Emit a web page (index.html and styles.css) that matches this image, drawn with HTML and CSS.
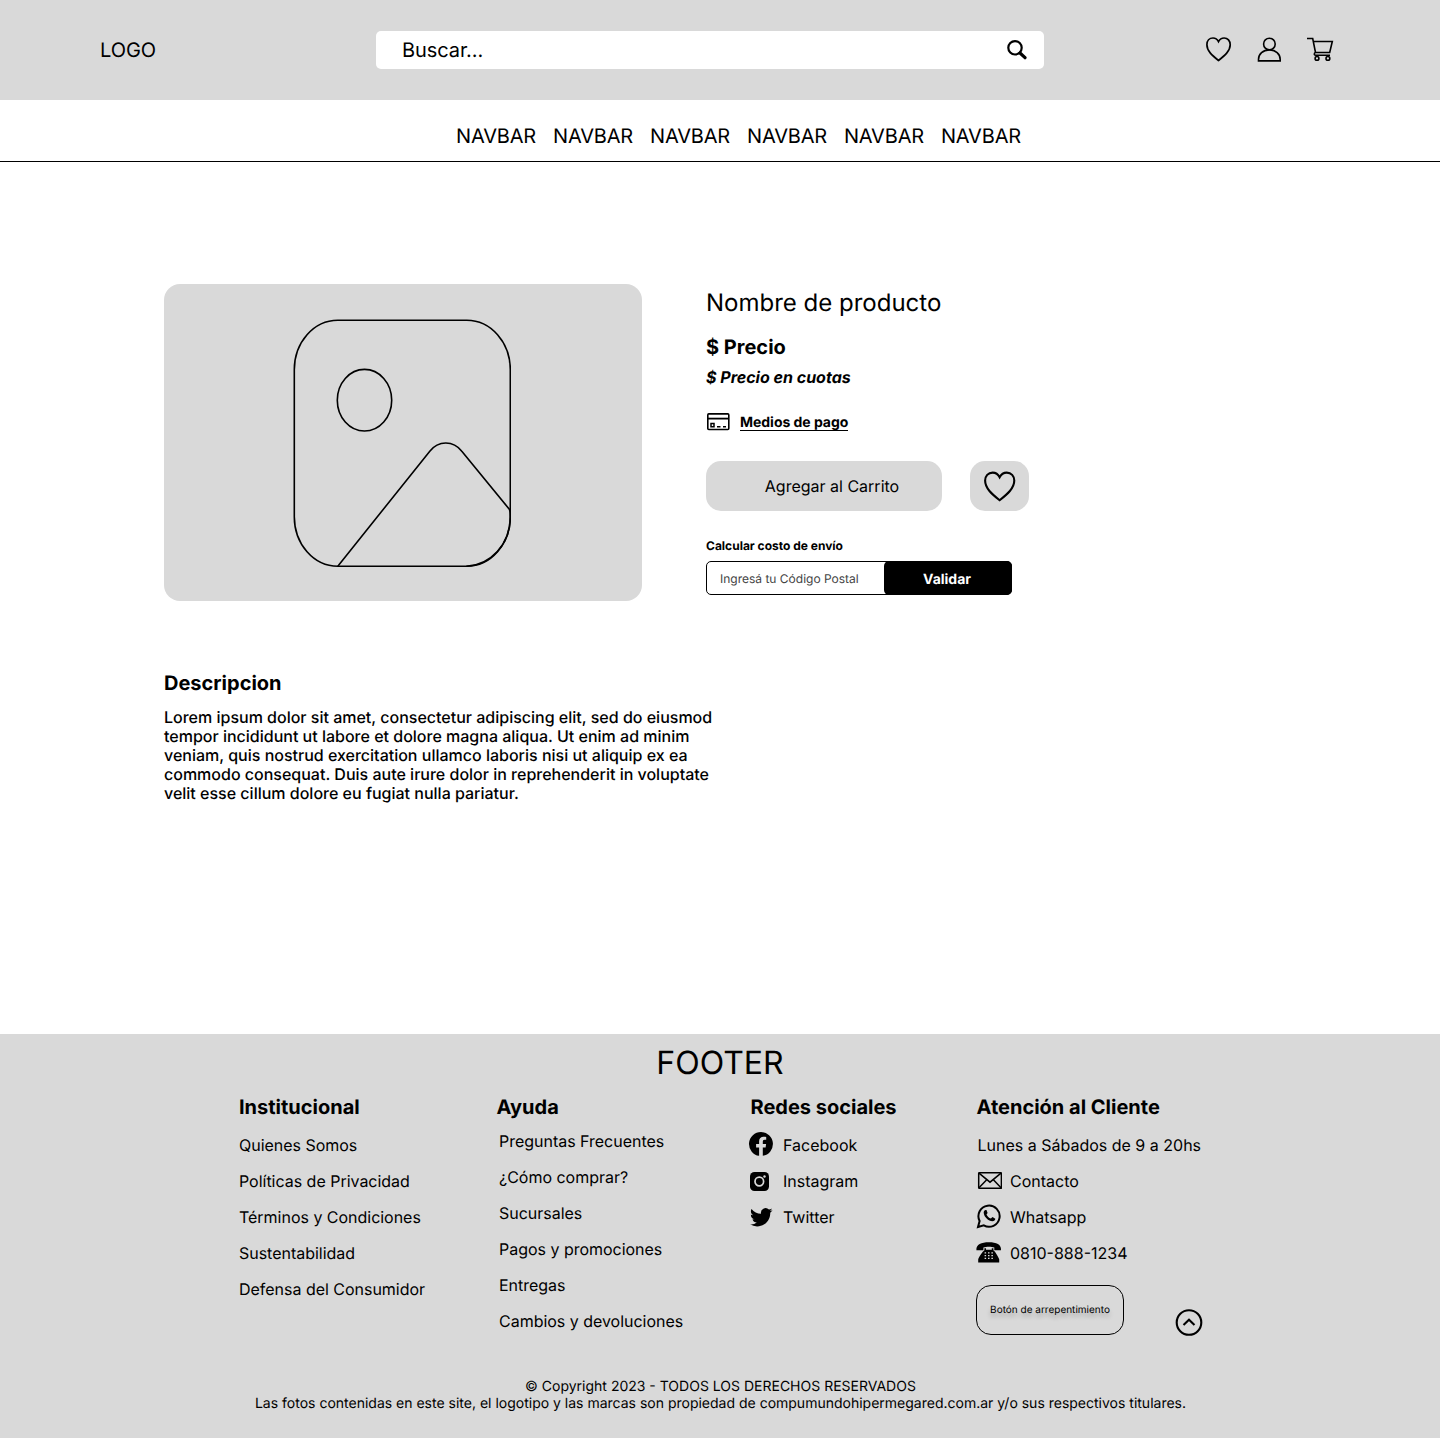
FILE: index.html
```html
<!DOCTYPE html>
<html lang="es">
<head>
<meta charset="utf-8">
<title>Producto</title>
<link rel="stylesheet" href="styles.css">
</head>
<body>
<header class="header">
  <span class="logo">LOGO</span>
  <div class="search">
    <span>Buscar...</span>
    <svg width="20" height="20" viewBox="0 0 20 20" fill="none" stroke="#000"><circle cx="8" cy="7.8" r="6.7" stroke-width="2.2"/><path d="M13 13l5 4.7" stroke-width="3.2" stroke-linecap="round"/></svg>
  </div>
  <div class="actions">
    <svg width="26" height="25" viewBox="0 0 26 25" fill="none" stroke="#000" stroke-width="1.7"><path d="M12.500 4.700C11 1.800 9.200 1 7 1C3.400 1 .9 3.900 .9 7.700C.9 14 6.300 18.500 12.500 23.500C18.700 18.500 24.200 14 24.200 7.700C24.200 3.900 21.700 1 18.100 1C15.900 1 14 1.800 12.500 4.700Z"/></svg>
    <svg width="24" height="25" viewBox="0 0 24 25" fill="none" stroke="#000" stroke-width="1.6"><path d="M1.500 23.900V22.500C1.500 17 6 12.900 12.300 12.900S23.200 17 23.200 22.500V23.900Z"/><circle cx="12.400" cy="7" r="5.800"/></svg>
    <svg width="27" height="25" viewBox="0 0 27 25" fill="none" stroke="#000" stroke-width="1.600"><path d="M0 1.500H5.700L8.500 15.500H22.700L25.300 4.500H6.500M8.500 15.500C7 15.700 6.800 18.200 8.500 18.200H23"/><circle cx="10" cy="21.400" r="1.900"/><circle cx="20.900" cy="21.400" r="1.900"/></svg>
  </div>
</header>
<nav class="nav">
  <a>NAVBAR</a><a>NAVBAR</a><a>NAVBAR</a><a>NAVBAR</a><a>NAVBAR</a><a>NAVBAR</a>
</nav>
<main class="main">
  <section class="product">
    <div class="photo">
      <svg width="218" height="248" viewBox="0 0 218 248" fill="none" stroke="#000" stroke-width="1.600"><g transform="translate(.3 .2)"><rect x="1" y="1" width="216" height="246" rx="43.500" ry="49.500"/><ellipse cx="71.200" cy="81" rx="27.200" ry="30.800"/><path d="M44.500 247L136.500 132C145 121 160 121 168.500 132L216 190C217 192 217 195 217 198C217 225 197 246 173 247"/></g></svg>
    </div>
    <div class="details">
      <h1 class="name">Nombre de producto</h1>
      <p class="price">$ Precio</p>
      <p class="installments">$ Precio en cuotas</p>
      <div class="payment">
        <svg width="24" height="18" viewBox="0 0 24 18" fill="none" stroke="#000"><rect x="1.800" y=".9" width="21" height="15.600" rx="1" stroke-width="1.600"/><path d="M1.800 5.600H22.800" stroke-width="1.800"/><path d="M5 10.500H8V13.700H5ZM11 13.700H14.500M17 13.700H20" stroke-width="1.500"/></svg>
        <a>Medios de pago</a>
      </div>
      <div class="buttons">
        <button class="add">Agregar al Carrito</button>
        <button class="fav"><svg width="32" height="31" viewBox="0 0 26 25" fill="none" stroke="#000" stroke-width="1.700"><path d="M12.700 4.900C11.200 2 9.300 1.200 7 1.200C3.400 1.200 .9 4 .9 7.700C.9 14 6.400 18.700 12.700 23.700C19 18.700 24.600 14 24.600 7.700C24.600 4 22.100 1.200 18.500 1.200C16.200 1.200 14.200 2 12.700 4.900Z"/></svg></button>
      </div>
      <p class="shipping">Calcular costo de envío</p>
      <div class="postal"><span>Ingresá tu Código Postal</span><button class="validate">Validar</button></div>
    </div>
  </section>
  <section class="description">
    <h2>Descripcion</h2>
    <p>Lorem ipsum dolor sit amet, consectetur adipiscing elit, sed do eiusmod<br>tempor incididunt ut labore et dolore magna aliqua. Ut enim ad minim<br>veniam, quis nostrud exercitation ullamco laboris nisi ut aliquip ex ea<br>commodo consequat. Duis aute irure dolor in reprehenderit in voluptate<br>velit esse cillum dolore eu fugiat nulla pariatur.</p>
  </section>
</main>
<footer class="footer">
  <div class="footer-title">FOOTER</div>
  <div class="columns">
    <section>
      <h3>Institucional</h3>
      <ul class="links">
        <li>Quienes Somos</li><li>Políticas de Privacidad</li><li>Términos y Condiciones</li><li>Sustentabilidad</li><li>Defensa del Consumidor</li>
      </ul>
    </section>
    <section>
      <h3>Ayuda</h3>
      <ul class="links help">
        <li>Preguntas Frecuentes</li><li>¿Cómo comprar?</li><li>Sucursales</li><li>Pagos y promociones</li><li>Entregas</li><li>Cambios y devoluciones</li>
      </ul>
    </section>
    <section>
      <h3>Redes sociales</h3>
      <ul class="links social">
        <li><svg width="26" height="26" viewBox="0 0 26 26"><path d="M13 1A12 12 0 0 0 11.100 24.850V16.500H8.100V13H11.100V10.300C11.100 7.300 12.900 5.700 15.600 5.700C16.900 5.700 18.200 5.900 18.200 5.900V8.800H16.700C15.200 8.800 14.800 9.700 14.800 10.700V13H18.100L17.600 16.500H14.800V24.850A12 12 0 0 0 13 1Z"/></svg>Facebook</li>
        <li><svg width="26" height="26" viewBox="0 0 26 26"><rect x="2" y="5" width="19" height="19" rx="4.500"/><circle cx="11.300" cy="14.500" r="4.300" fill="none" stroke="#d9d9d9" stroke-width="1.700"/><circle cx="16.500" cy="9.500" r="1.200" fill="#d9d9d9"/></svg>Instagram</li>
        <li><svg width="26" height="26" viewBox="0 0 26 26"><path transform="translate(2 3) scale(.94)" d="M23.950 4.570a10 10 0 0 1-2.820.78 4.960 4.960 0 0 0 2.160-2.730c-.950.560-2 .960-3.130 1.180a4.920 4.920 0 0 0-8.380 4.490C7.690 8.090 4.070 6.130 1.640 3.160a4.820 4.820 0 0 0-.670 2.480c0 1.710.870 3.210 2.190 4.100a4.900 4.900 0 0 1-2.230-.620v.060a4.920 4.920 0 0 0 3.950 4.830 5 5 0 0 1-2.210.080 4.940 4.940 0 0 0 4.600 3.420A9.870 9.870 0 0 1 0 19.540a14 14 0 0 0 7.550 2.210c9.050 0 14-7.500 14-13.980 0-.210 0-.420-.010-.630a9.940 9.940 0 0 0 2.460-2.550z"/></svg>Twitter</li>
      </ul>
    </section>
    <section>
      <h3>Atención al Cliente</h3>
      <ul class="links contact">
        <li class="hours">Lunes a Sábados de 9 a 20hs</li>
        <li><svg width="26" height="26" viewBox="0 0 26 26" fill="none" stroke="#000" stroke-width="1.500"><rect x="2.700" y="5.700" width="22.700" height="15.500" rx=".5"/><path d="M3 6.200L14 15.200L25 6.200M3 20.700L10.700 12.700M25 20.700L17.400 12.700"/></svg>Contacto</li>
        <li><svg width="26" height="26" viewBox="0 0 26 26"><path d="M2 24L3.600 18A10.600 10.600 0 1 1 7.800 22.400Z" fill="none" stroke="#000" stroke-width="2"/><path d="M9.500 7C8.500 7.200 7.600 8.500 7.700 9.800C8 14.200 12.500 18.200 16.500 18.200C18.100 18.200 19.300 17.200 19.300 15.800L16.500 14.100L14.900 15.600C12.900 14.800 11.300 13.200 10.500 11.400L11.600 9.900L10.500 7Z"/></svg>Whatsapp</li>
        <li><svg width="26" height="26" viewBox="0 0 26 26"><g transform="translate(-.6 .8)"><path d="M1 10.400C.6 4.500 6 2.500 13.500 2.500S26 4.500 25.600 10.400H18.900V7.800C16 6.700 11 6.700 8 7.800V10.400Z"/><path d="M9 8.500H10.600V10H16.400V8.500H18V10.500C20 12 22.500 16.500 23.800 19.500V22.800H2.800V19.500C4 16.500 7 12 9 10.500Z"/><path d="M9.200 13H18M9.200 15.800H18M9.200 18.600H18" fill="none" stroke="#d9d9d9" stroke-width="1.300" stroke-dasharray="1.500 1.900"/></g></svg>0810-888-1234</li>
      </ul>
      <div class="contact-end">
        <button class="regret">Botón de arrepentimiento</button>
        <svg width="28" height="28" viewBox="0 0 28 28" fill="none" stroke="#000" stroke-width="2.100"><circle cx="14" cy="14.500" r="12.300"/><path d="M8.500 17L14 11.700L19.500 17"/></svg>
      </div>
    </section>
  </div>
  <p class="legal">© Copyright 2023 - TODOS LOS DERECHOS RESERVADOS<br>Las fotos contenidas en este site, el logotipo y las marcas son propiedad de compumundohipermegared.com.ar y/o sus respectivos titulares.</p>
</footer>
</body>
</html>
```
FILE: styles.css
```css
* { box-sizing: border-box; margin: 0; padding: 0; }
body { width: 1440px; font: 400 16px/19px Inter, sans-serif; color: #000; background: #fff; text-rendering: geometricPrecision; }
button { font: inherit; color: inherit; border: 0; text-rendering: inherit; }
ul { list-style: none; }
svg { display: block; flex: none; }

.header { height: 100px; background: #d9d9d9; display: grid; grid-template-columns: 276px 668px 1fr; align-items: center; padding: 0 106px 0 100px; font-size: 20px; line-height: 24px; letter-spacing: -.08px; }
.search { height: 38px; background: #fff; border-radius: 5px; display: flex; align-items: center; justify-content: space-between; padding: 0 17px 0 26px; }
.actions { display: flex; justify-content: flex-end; gap: 25.5px; padding: 0 .5px 1px 0; }

.nav { height: 62px; border-bottom: 1px solid #000; display: flex; justify-content: center; gap: 17px; padding: 24px 0 0 37px; font-size: 20px; line-height: 24px; letter-spacing: -.18px; }

.main { height: 872px; padding: 122px 164px 0; }
.product { display: flex; gap: 64px; }
.photo { width: 478px; height: 317px; background: #d9d9d9; border-radius: 16px; display: flex; justify-content: center; padding: 35px 2px 0 0; }
.name { margin-top: 4px; font-size: 24px; line-height: 29px; font-weight: 400; }
.price { margin-top: 18px; font-size: 20px; line-height: 24px; font-weight: 700; }
.installments { margin-top: 9px; font-weight: 700; font-style: italic; }
.payment { display: flex; gap: 10px; margin-top: 26px; height: 18px; font-size: 14px; line-height: 17px; font-weight: 700; }
.payment a { margin-top: 1px; border-bottom: 1px solid #000; height: 17px; letter-spacing: -.03px; }
.buttons { display: flex; gap: 28px; margin-top: 30px; }
.add { width: 236px; height: 50px; border-radius: 15px; background: #d9d9d9; padding-left: 16px; }
.fav { width: 59px; height: 50px; border-radius: 15px; background: #d9d9d9; display: flex; align-items: center; justify-content: center; }
.shipping { margin-top: 27px; font-size: 12px; line-height: 15px; font-weight: 700; }
.postal { width: 306px; height: 34px; margin-top: 8px; border: 1px solid #000; border-radius: 5px; display: flex; align-items: center; justify-content: space-between; padding-left: 13px; font-size: 12px; background: #fff; }
.postal span { color: #444; }
.validate { width: 128px; height: 34px; margin-right: -1px; border-radius: 5px; background: #000; color: #fff; font-size: 14px; font-weight: 700; padding: 3px 2px 0 0; }
.description { margin-top: 70px; }
.description h2 { font-size: 20px; line-height: 24px; font-weight: 700; }
.description p { margin-top: 13px; font-weight: 500; }

.footer { height: 404px; background: #d9d9d9; padding-top: 9px; }
.footer-title { font-size: 32px; line-height: 39px; text-align: center; }
.columns { display: grid; grid-template-columns: 257.500px 254px 226px 230px; height: 283px; padding: 13px 0 0 239px; }
.columns h3 { font-size: 20px; line-height: 24px; font-weight: 700; }
.links { display: flex; flex-direction: column; gap: 17px; margin-top: 17px; letter-spacing: -.02px; }
.links li { height: 19px; display: flex; align-items: center; }
.help { margin: 13px 0 0 2.500px; }
.social { margin-left: -2.500px; }
.social li { gap: 9px; letter-spacing: 0; }
.contact { margin-left: -1px; letter-spacing: 0; }
.contact li { gap: 8.500px; }
.contact .hours { padding-left: 2px; }
.social svg, .contact svg { margin-top: -3px; }
.contact-end { display: flex; justify-content: space-between; align-items: flex-end; width: 228px; margin: 22px 0 0 -1px; }
.regret { width: 148px; height: 50px; border: 1px solid #000; border-radius: 15px; background: none; font-size: 10px; line-height: 12px; text-shadow: 0 4px 4px rgba(0, 0, 0, .25); padding-left: 1px; }
.contact-end svg { margin: 0 1px -1px 0; }
.legal { margin-top: 13px; padding-left: 1px; font-size: 14px; line-height: 17px; text-align: center; }
```
